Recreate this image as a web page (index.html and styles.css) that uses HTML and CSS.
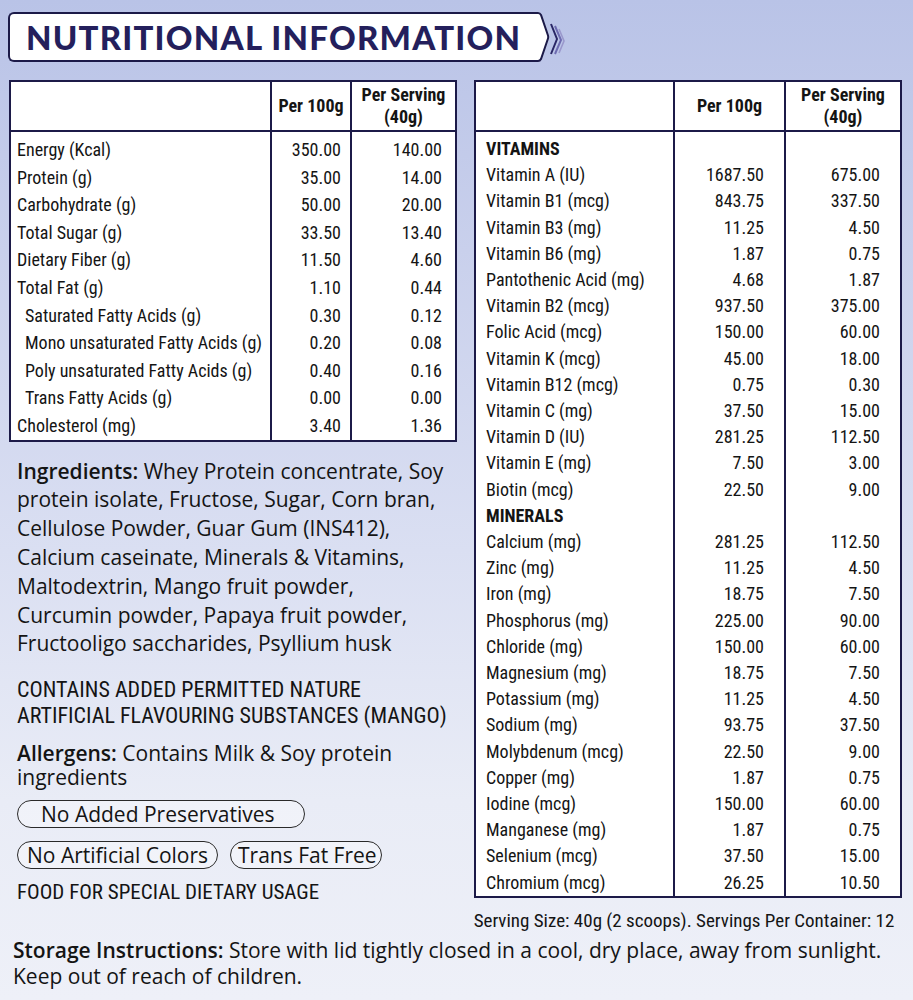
FILE: index.html
```html
<!DOCTYPE html>
<html lang="en">
<head>
<meta charset="utf-8">
<title>Nutritional Information</title>
<link rel="stylesheet" href="styles.css">
</head>
<body>
<div class="page">
  <header class="title-bar">
    <div class="title-box"><h1>NUTRITIONAL INFORMATION</h1></div>
    <svg class="title-end" width="34" height="50" viewBox="0 0 34 50" aria-hidden="true">
      <path d="M0 1 H6 Q8 1 9 3 L16 23.5 Q16.5 25 16 26.5 L9 47 Q8 49 6 49 H0 Z" fill="#fff"/>
      <path d="M0 1 H6 Q8 1 9 3 L16 23.5 Q16.5 25 16 26.5 L9 47 Q8 49 6 49 H0" fill="none" stroke="#1c1a48" stroke-width="2"/>
      <path d="M19 12 L25 27 L19 42" fill="none" stroke="#2a2766" stroke-width="2"/>
      <path d="M23 14 L29 28 L23 42" fill="none" stroke="#6d6bb0" stroke-width="2"/>
      <path d="M27 17 L32 29 L27 41" fill="none" stroke="#9a98cc" stroke-width="1.6"/>
    </svg>
  </header>

  <div class="columns">
    <div class="col col-left">
      <table class="nt nt-left">
        <colgroup><col class="c1"><col class="c2"><col class="c3"></colgroup>
        <thead>
          <tr><th></th><th>Per 100g</th><th>Per Serving<br>(40g)</th></tr>
        </thead>
        <tbody>
          <tr class="first"><td>Energy (Kcal)</td><td>350.00</td><td>140.00</td></tr>
          <tr><td>Protein (g)</td><td>35.00</td><td>14.00</td></tr>
          <tr><td>Carbohydrate (g)</td><td>50.00</td><td>20.00</td></tr>
          <tr><td>Total Sugar (g)</td><td>33.50</td><td>13.40</td></tr>
          <tr><td>Dietary Fiber (g)</td><td>11.50</td><td>4.60</td></tr>
          <tr><td>Total Fat (g)</td><td>1.10</td><td>0.44</td></tr>
          <tr><td class="sub">Saturated Fatty Acids (g)</td><td>0.30</td><td>0.12</td></tr>
          <tr><td class="sub">Mono unsaturated Fatty Acids (g)</td><td>0.20</td><td>0.08</td></tr>
          <tr><td class="sub">Poly unsaturated Fatty Acids (g)</td><td>0.40</td><td>0.16</td></tr>
          <tr><td class="sub">Trans Fatty Acids (g)</td><td>0.00</td><td>0.00</td></tr>
          <tr><td>Cholesterol (mg)</td><td>3.40</td><td>1.36</td></tr>
        </tbody>
      </table>

      <p class="ingredients"><b>Ingredients:</b> Whey Protein concentrate, Soy<br>protein isolate, Fructose, Sugar, Corn bran,<br>Cellulose Powder, Guar Gum (INS412),<br>Calcium caseinate, Minerals &amp; Vitamins,<br>Maltodextrin, Mango fruit powder,<br>Curcumin powder, Papaya fruit powder,<br>Fructooligo saccharides, Psyllium husk</p>

      <p class="contains">CONTAINS ADDED PERMITTED NATURE<br>ARTIFICIAL FLAVOURING SUBSTANCES (MANGO)</p>

      <p class="allergens"><b>Allergens:</b> Contains Milk &amp; Soy protein<br>ingredients</p>

      <div class="badges badges-1"><span class="pill pill-wide">No Added Preservatives</span></div>
      <div class="badges badges-2"><span class="pill pill-colors">No Artificial Colors</span><span class="pill pill-trans">Trans Fat Free</span></div>

      <p class="dietary">FOOD FOR SPECIAL DIETARY USAGE</p>
    </div>

    <div class="col col-right">
      <table class="nt nt-right">
        <colgroup><col class="c1"><col class="c2"><col class="c3"></colgroup>
        <thead>
          <tr><th></th><th>Per 100g</th><th>Per Serving<br>(40g)</th></tr>
        </thead>
        <tbody>
          <tr class="first"><td class="group">VITAMINS</td><td></td><td></td></tr>
          <tr><td>Vitamin A (IU)</td><td>1687.50</td><td>675.00</td></tr>
          <tr><td>Vitamin B1 (mcg)</td><td>843.75</td><td>337.50</td></tr>
          <tr><td>Vitamin B3 (mg)</td><td>11.25</td><td>4.50</td></tr>
          <tr><td>Vitamin B6 (mg)</td><td>1.87</td><td>0.75</td></tr>
          <tr><td>Pantothenic Acid (mg)</td><td>4.68</td><td>1.87</td></tr>
          <tr><td>Vitamin B2 (mcg)</td><td>937.50</td><td>375.00</td></tr>
          <tr><td>Folic Acid (mcg)</td><td>150.00</td><td>60.00</td></tr>
          <tr><td>Vitamin K (mcg)</td><td>45.00</td><td>18.00</td></tr>
          <tr><td>Vitamin B12 (mcg)</td><td>0.75</td><td>0.30</td></tr>
          <tr><td>Vitamin C (mg)</td><td>37.50</td><td>15.00</td></tr>
          <tr><td>Vitamin D (IU)</td><td>281.25</td><td>112.50</td></tr>
          <tr><td>Vitamin E (mg)</td><td>7.50</td><td>3.00</td></tr>
          <tr><td>Biotin (mcg)</td><td>22.50</td><td>9.00</td></tr>
          <tr><td class="group">MINERALS</td><td></td><td></td></tr>
          <tr><td>Calcium (mg)</td><td>281.25</td><td>112.50</td></tr>
          <tr><td>Zinc (mg)</td><td>11.25</td><td>4.50</td></tr>
          <tr><td>Iron (mg)</td><td>18.75</td><td>7.50</td></tr>
          <tr><td>Phosphorus (mg)</td><td>225.00</td><td>90.00</td></tr>
          <tr><td>Chloride (mg)</td><td>150.00</td><td>60.00</td></tr>
          <tr><td>Magnesium (mg)</td><td>18.75</td><td>7.50</td></tr>
          <tr><td>Potassium (mg)</td><td>11.25</td><td>4.50</td></tr>
          <tr><td>Sodium (mg)</td><td>93.75</td><td>37.50</td></tr>
          <tr><td>Molybdenum (mcg)</td><td>22.50</td><td>9.00</td></tr>
          <tr><td>Copper (mg)</td><td>1.87</td><td>0.75</td></tr>
          <tr><td>Iodine (mcg)</td><td>150.00</td><td>60.00</td></tr>
          <tr><td>Manganese (mg)</td><td>1.87</td><td>0.75</td></tr>
          <tr><td>Selenium (mcg)</td><td>37.50</td><td>15.00</td></tr>
          <tr><td>Chromium (mcg)</td><td>26.25</td><td>10.50</td></tr>
        </tbody>
      </table>
      <p class="serving">Serving Size: 40g (2 scoops). Servings Per Container: 12</p>
    </div>
  </div>

  <p class="storage"><b>Storage Instructions:</b> Store with lid tightly closed in a cool, dry place, away from sunlight.<br>Keep out of reach of children.</p>
</div>
</body>
</html>
```

FILE: styles.css
```css
html, body {
  margin: 0;
  padding: 0;
}
body {
  width: 913px;
  height: 1000px;
  overflow: hidden;
  background: linear-gradient(180deg, #b9c3e7 0%, #c9d0ec 25%, #dadff2 55%, #e9ecf6 80%, #eef0f8 100%);
  color: #141414;
  font-family: "Open Sans", "Liberation Sans", sans-serif;
}
.page {
  padding: 12px 0 0 8px;
}

/* Title */
.title-bar {
  display: flex;
  align-items: flex-start;
  height: 50px;
}
.title-box {
  width: 522px;
  height: 46px;
  background: #fff;
  border: 2px solid #1c1a48;
  border-right: none;
  border-radius: 6px 0 0 6px;
  display: flex;
  align-items: center;
}
.title-box h1 {
  margin: 0 0 0 16px;
  font-family: "Lato", "Open Sans", sans-serif;
  font-weight: 900;
  font-size: 33px;
  letter-spacing: 1.2px;
  color: #241f5c;
  line-height: 1;
}
.title-end {
  display: block;
  flex: none;
}

/* Columns */
.columns {
  display: flex;
  gap: 19px;
  margin-top: 18px;
  padding-left: 1px;
}
.col-left { width: 446px; }
.col-right { width: 426px; }

/* Tables */
.nt {
  border-collapse: collapse;
  table-layout: fixed;
  background: #fff;
  border: 2px solid #1c1a48;
  font-family: "Roboto Condensed", "Open Sans", sans-serif;
  font-size: 18px;
  color: #141414;
}
.nt th, .nt td {
  padding: 0;
  border-left: 2px solid #1c1a48;
  white-space: nowrap;
}
.nt th {
  height: 48px;
  border-bottom: 2px solid #1c1a48;
  font-weight: bold;
  text-align: center;
  line-height: 22px;
  vertical-align: middle;
}
.nt-left { width: 446px; }
.nt-left col.c1 { width: 261px; }
.nt-left col.c2 { width: 80px; }
.nt-left col.c3 { width: 105px; }
.nt-left td { line-height: 27.6px; }
.nt-left td:first-child { padding-left: 6px; }
.nt-left td.sub { padding-left: 14px; }
.nt-left td:nth-child(2) { text-align: right; padding-right: 9px; }
.nt-left td:nth-child(3) { text-align: right; padding-right: 13px; }
.nt-left tr.first td { padding-top: 4px; }

.nt-right { width: 426px; }
.nt-right col.c1 { width: 199px; }
.nt-right col.c2 { width: 111px; }
.nt-right col.c3 { width: 116px; }
.nt-right td { line-height: 26.2px; }
.nt-right td:first-child { padding-left: 10px; }
.nt-right td:nth-child(2),
.nt-right td:nth-child(3) { text-align: right; padding-right: 20px; }
.nt-right tr.first td { padding-top: 4px; }
.nt td.group { font-weight: bold; }

/* Left text */
.ingredients {
  margin: 15px 0 0 8px;
  font-size: 21px;
  line-height: 28.8px;
  white-space: nowrap;
}
.ingredients b, .allergens b, .storage b { font-weight: 600; }
.contains {
  margin: 19px 0 0 8px;
  font-family: "Roboto Condensed", "Open Sans", sans-serif;
  font-size: 22px;
  line-height: 26px;
  white-space: nowrap;
}
.allergens {
  margin: 12px 0 0 8px;
  font-size: 21px;
  line-height: 24px;
  white-space: nowrap;
}
.badges {
  display: flex;
  gap: 12px;
  margin-left: 8px;
}
.badges-1 { margin-top: 11px; }
.badges-2 { margin-top: 13px; }
.pill {
  display: flex;
  align-items: center;
  box-sizing: border-box;
  height: 28px;
  border: 1px solid #2a2a2a;
  border-radius: 14px;
  background: rgba(255,255,255,0.35);
  font-size: 21px;
  white-space: nowrap;
}
.pill-wide { width: 288px; padding-left: 23px; }
.pill-colors { width: 201px; padding-left: 9px; }
.pill-trans { width: 152px; padding-left: 7px; }
.dietary {
  margin: 11px 0 0 8px;
  font-family: "Roboto Condensed", "Open Sans", sans-serif;
  font-size: 21px;
  line-height: 24px;
  white-space: nowrap;
}

/* Right text */
.serving {
  margin: 11px 0 0 -6px;
  font-family: "Roboto Condensed", "Open Sans", sans-serif;
  font-size: 19px;
  line-height: 24px;
  text-align: center;
  white-space: nowrap;
}

/* Storage */
.storage {
  margin: 4px 0 0 5px;
  font-size: 21px;
  line-height: 26px;
}
```
